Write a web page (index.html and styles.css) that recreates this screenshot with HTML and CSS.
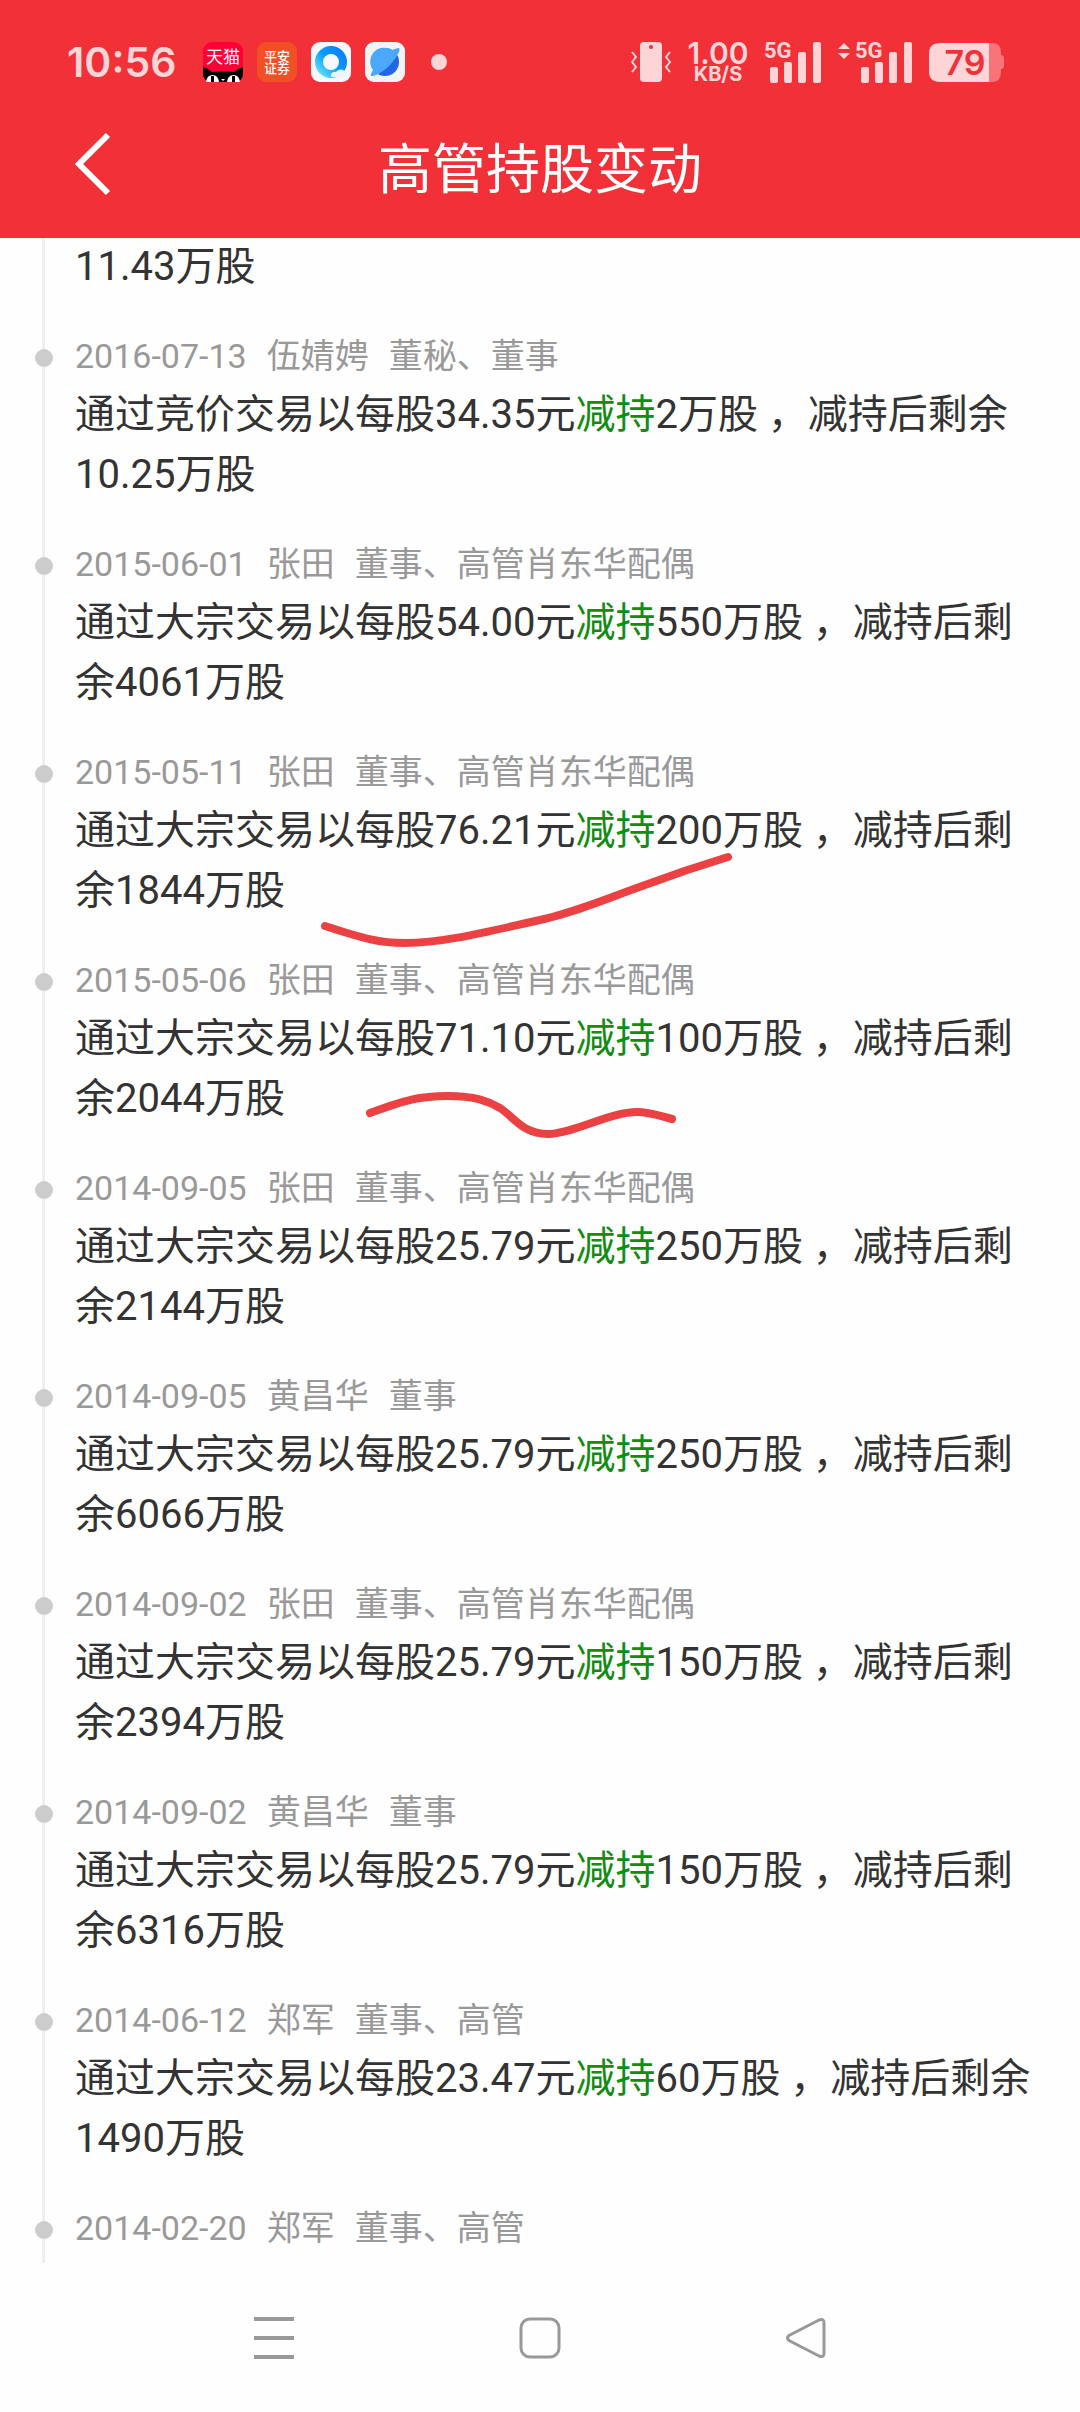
FILE: index.html
```
<!DOCTYPE html>
<html lang="zh-CN">
    <head>
        <meta charset="utf-8" />
        <meta name="viewport" content="width=device-width">
        <title>高管持股变动</title>
        <link rel="stylesheet" href="styles.css">
    </head>
    <body>
        <header class="header">
            <div class="status">
                <span class="time">10:56</span>
                <div class="apps">
                    <!--天猫-->
                    <svg class="app" viewBox="0 0 40 40">
                        <rect width="40" height="40" rx="9" fill="#ff0036"/>
                        <path d="M0 25 Q5 26 9 30 Q20 28.500 31 30 Q35 26 40 25 V31 Q40 40 31 40 H9 Q0 40 0 31Z" fill="#000"/>
                        <path d="M3 40 Q4 33 9.500 33 Q15 33 16 40Z M24 40 Q25 33 30.500 33 Q36 33 37 40Z M18 37h4l-2 2z" fill="#fff"/>
                        <path d="M9.500 34v6M30.500 34v6" stroke="#000" stroke-width="3"/>
                        <text x="20" y="21" font-size="17" text-anchor="middle" fill="#fff">天猫</text>
                    </svg>
                    <!--平安证券-->
                    <svg class="app" viewBox="0 0 40 40">
                        <rect width="40" height="40" rx="9" fill="#f05023"/>
                        <g font-size="13" font-weight="500" text-anchor="middle" fill="#fff">
                            <text x="20" y="19">平安</text>
                            <text x="20" y="31">证券</text>
                        </g>
                    </svg>
                    <!--浏览器-->
                    <svg class="app" viewBox="0 0 40 40">
                        <defs>
                            <linearGradient id="ring" x1="1" y1="0" x2="0" y2="1">
                                <stop offset="0" stop-color="#0a7cff"/>
                                <stop offset="0.5" stop-color="#0a9cff"/>
                                <stop offset="1" stop-color="#5fe0fb"/>
                            </linearGradient>
                        </defs>
                        <rect width="40" height="40" rx="9" fill="#f6f8fc"/>
                        <circle cx="20" cy="20" r="12" fill="none" stroke="url(#ring)" stroke-width="8"/>
                        <path d="M20 35a4 4 0 0 1 5-5 6 6 0 0 1 9-1 4 4 0 0 1 1 6z" fill="#eef4fe"/>
                    </svg>
                    <svg class="app" viewBox="0 0 40 40">
                        <rect width="40" height="40" rx="9" fill="#f1f3f5"/>
                        <circle cx="20" cy="20" r="14" fill="#2465e8"/>
                        <path d="M33 6c2 0 2 2 0 6-4 8-14 18-22 21-4 2-6 1-5-1l2-4A14 14 0 0 1 27 8z" fill="#4aa9fa"/>
                    </svg>
                </div>
                <span class="more"></span>
                <div class="signals">
                    <!--震动-->
                    <svg class="vibrate" viewBox="0 0 42 42">
                        <rect x="10" y="1" width="22" height="40" rx="4" fill="#fdd5d7"/>
                        <circle cx="21" cy="6" r="2" fill="#f13038"/>
                        <path d="M2 11l4 5-4 5 4 5-4 5M40 11l-4 5 4 5-4 5 4 5" fill="none" stroke="#fdd5d7" stroke-width="2"/>
                    </svg>
                    <div class="speed">
                        <b>1.00</b>
                        <small>KB/S</small>
                    </div>
                    <svg class="cell" viewBox="0 0 58 42">
                        <text x="0" y="17" class="net">5G</text>
                        <path d="M8 28h4v12h-4zM22 23h4v17h-4zM36 13h4v27h-4zM51 3h4v37h-4z" class="bars"/>
                    </svg>
                    <svg class="cell wide" viewBox="0 0 75 42">
                        <path d="M0 8l6-6 6 6zM0 12h12l-6 6z" fill="#fdd5d7"/>
                        <text x="17" y="17" class="net">5G</text>
                        <path d="M25 28h4v12h-4zM39 23h4v17h-4zM53 13h4v27h-4zM68 3h4v37h-4z" class="bars"/>
                    </svg>
                    <svg class="battery" viewBox="0 0 76 40">
                        <path d="M60 1h3q9 0 9 9v3q3 0 3 4v6q0 4-3 4v3q0 10-9 10h-3z" fill="#f77579"/>
                        <path d="M60 1H11Q0 1 0 12v17q0 11 11 11h49z" fill="#fdd5d7"/>
                        <text x="36" y="33" font-size="34" font-weight="600" text-anchor="middle" fill="#f13038">79</text>
                    </svg>
                </div>
            </div>
            <div class="bar">
                <button class="back" type="button" aria-label="返回">
                    <svg viewBox="0 0 36 64"><path d="M33 3L4 32l29 29" fill="none" stroke="#fff" stroke-width="6"/></svg>
                </button>
                <h1>高管持股变动</h1>
            </div>
        </header>

        <main class="content">
            <ol class="timeline">
                <li class="rest">
                    <p>11.43万股</p>
                </li>
                <li>
                    <div class="info"><time>2016-07-13</time><span>伍婧娉</span><span>董秘、董事</span></div>
                    <p>通过竞价交易以每股34.35元<span class="sell">减持</span>2万股 ，减持后剩余10.25万股</p>
                </li>
                <li>
                    <div class="info"><time>2015-06-01</time><span>张田</span><span>董事、高管肖东华配偶</span></div>
                    <p>通过大宗交易以每股54.00元<span class="sell">减持</span>550万股 ，减持后剩余4061万股</p>
                </li>
                <li>
                    <div class="info"><time>2015-05-11</time><span>张田</span><span>董事、高管肖东华配偶</span></div>
                    <p>通过大宗交易以每股76.21元<span class="sell">减持</span>200万股 ，减持后剩余1844万股</p>
                    <!--手画的红线-->
                    <svg class="mark" viewBox="300 847 440 110">
                        <path d="M325 926C365 939 380 943 405 943C445 943 490 931 540 920C575 912 600 901 645 885C680 872 705 864 728 857"/>
                    </svg>
                </li>
                <li>
                    <div class="info"><time>2015-05-06</time><span>张田</span><span>董事、高管肖东华配偶</span></div>
                    <p>通过大宗交易以每股71.10元<span class="sell">减持</span>100万股 ，减持后剩余2044万股</p>
                    <svg class="mark" viewBox="300 1055 440 110">
                        <path d="M370 1113C405 1100 420 1096 448 1096C475 1096 488 1101 500 1108C515 1118 523 1134 548 1134C572 1134 610 1112 637 1112C650 1112 660 1116 672 1119"/>
                    </svg>
                </li>
                <li>
                    <div class="info"><time>2014-09-05</time><span>张田</span><span>董事、高管肖东华配偶</span></div>
                    <p>通过大宗交易以每股25.79元<span class="sell">减持</span>250万股 ，减持后剩余2144万股</p>
                </li>
                <li>
                    <div class="info"><time>2014-09-05</time><span>黄昌华</span><span>董事</span></div>
                    <p>通过大宗交易以每股25.79元<span class="sell">减持</span>250万股 ，减持后剩余6066万股</p>
                </li>
                <li>
                    <div class="info"><time>2014-09-02</time><span>张田</span><span>董事、高管肖东华配偶</span></div>
                    <p>通过大宗交易以每股25.79元<span class="sell">减持</span>150万股 ，减持后剩余2394万股</p>
                </li>
                <li>
                    <div class="info"><time>2014-09-02</time><span>黄昌华</span><span>董事</span></div>
                    <p>通过大宗交易以每股25.79元<span class="sell">减持</span>150万股 ，减持后剩余6316万股</p>
                </li>
                <li>
                    <div class="info"><time>2014-06-12</time><span>郑军</span><span>董事、高管</span></div>
                    <p>通过大宗交易以每股23.47元<span class="sell">减持</span>60万股 ，减持后剩余1490万股</p>
                </li>
                <li>
                    <div class="info"><time>2014-02-20</time><span>郑军</span><span>董事、高管</span></div>
                </li>
            </ol>
        </main>

        <nav class="nav">
            <button type="button" aria-label="菜单">
                <svg viewBox="0 0 42 42"><path d="M1 2h40M1 21h40M1 40h40" stroke-width="4"/></svg>
            </button>
            <button type="button" aria-label="主页">
                <svg viewBox="0 0 42 42"><rect x="2" y="2" width="38" height="38" rx="9" stroke-width="3"/></svg>
            </button>
            <button type="button" aria-label="返回上一页">
                <svg viewBox="0 0 42 42"><path d="M34 3L4 18.500Q1 21 4 23.500L34 39Q39 41 39 36V6Q39 1 34 3Z" stroke-width="3"/></svg>
            </button>
        </nav>
    </body>
</html>
```
FILE: styles.css
```
*{
    box-sizing: border-box;
    margin: 0;
    padding: 0;
}
body{
    display: flex;
    flex-direction: column;
    height: 100vh;
    background: #fefefe;
    color: #333;
    font-family: Roboto, "Noto Sans CJK SC", sans-serif;
}
button{
    border: 0;
    background: none;
}
svg{
    display: block;
    overflow: visible;
}

/*顶部*/
.header{
    flex: none;
    background: #f13038;
    color: #fff;
}
.status{
    display: flex;
    align-items: center;
    height: 100px;
    padding: 24px 75px 0 67px;
    color: #fdd5d7;
    font-family: Inter, "Noto Sans CJK SC", sans-serif;
}
.time{
    width: 136px;
    font-size: 41px;
    font-weight: 600;
    line-height: 42px;
}
.apps{
    display: flex;
    gap: 14px;
}
.app{
    width: 40px;
    height: 40px;
}
.more{
    width: 16px;
    height: 16px;
    margin-left: 26px;
    border-radius: 50%;
    background: #fdd5d7;
}
.signals{
    display: flex;
    align-items: center;
    gap: 16px;
    margin-left: auto;
}
.vibrate{
    width: 42px;
    height: 42px;
}
.speed{
    display: flex;
    flex-direction: column;
    align-items: center;
    width: 60px;
}
.speed b{
    font-size: 30px;
    font-weight: 600;
    line-height: 24px;
}
.speed small{
    font-size: 20px;
    font-weight: 700;
    line-height: 18px;
}
.cell{
    width: 58px;
    height: 42px;
}
.wide{
    width: 75px;
}
.net{
    fill: #fdd5d7;
    font-family: Roboto, sans-serif;
    font-size: 22px;
    font-weight: 700;
}
.bars{
    fill: #fdd5d7;
    stroke: #fdd5d7;
    stroke-width: 4;
    stroke-linejoin: round;
}
.battery{
    width: 76px;
    height: 40px;
}
.bar{
    display: grid;
    grid-template-columns: 1fr auto 1fr;
    align-items: center;
    height: 138px;
    padding: 0 75px;
}
.back{
    justify-self: start;
    padding-bottom: 10px;
}
.back svg{
    width: 36px;
    height: 64px;
}
h1{
    padding-top: 4px;
    font-size: 54px;
    font-weight: 400;
    line-height: 60px;
}

/*时间线*/
.content{
    flex: 1;
    min-height: 0;
    overflow: hidden;
}
.timeline{
    margin-top: -1px;
    list-style: none;
    background: linear-gradient(#eee, #eee) 42px 0 / 3px 100% no-repeat;
}
.timeline li{
    position: relative;
    padding: 0 40px 34px 75px;
}
.info{
    display: flex;
    gap: 20px;
    margin-bottom: 4px;
    color: #999;
    font-size: 34px;
    line-height: 50px;
}
/*圆点*/
.info::before{
    content: "";
    position: absolute;
    left: 35px;
    top: 18px;
    width: 18px;
    height: 18px;
    border-radius: 50%;
    background: #ccc;
}
.timeline p{
    font-size: 40px;
    line-height: 60px;
}
.sell{
    color: #128c12;
}
.mark{
    position: absolute;
    left: 300px;
    top: 100px;
    width: 440px;
    height: 110px;
    fill: none;
    stroke: #ec4142;
    stroke-width: 8;
    stroke-linecap: round;
}

/*底部导航*/
.nav{
    flex: none;
    display: grid;
    grid-template-columns: repeat(3, 1fr);
    place-items: center;
    height: 149px;
    padding: 0 13%;
}
.nav svg{
    width: 42px;
    height: 42px;
    fill: none;
    stroke: #999;
}
```
